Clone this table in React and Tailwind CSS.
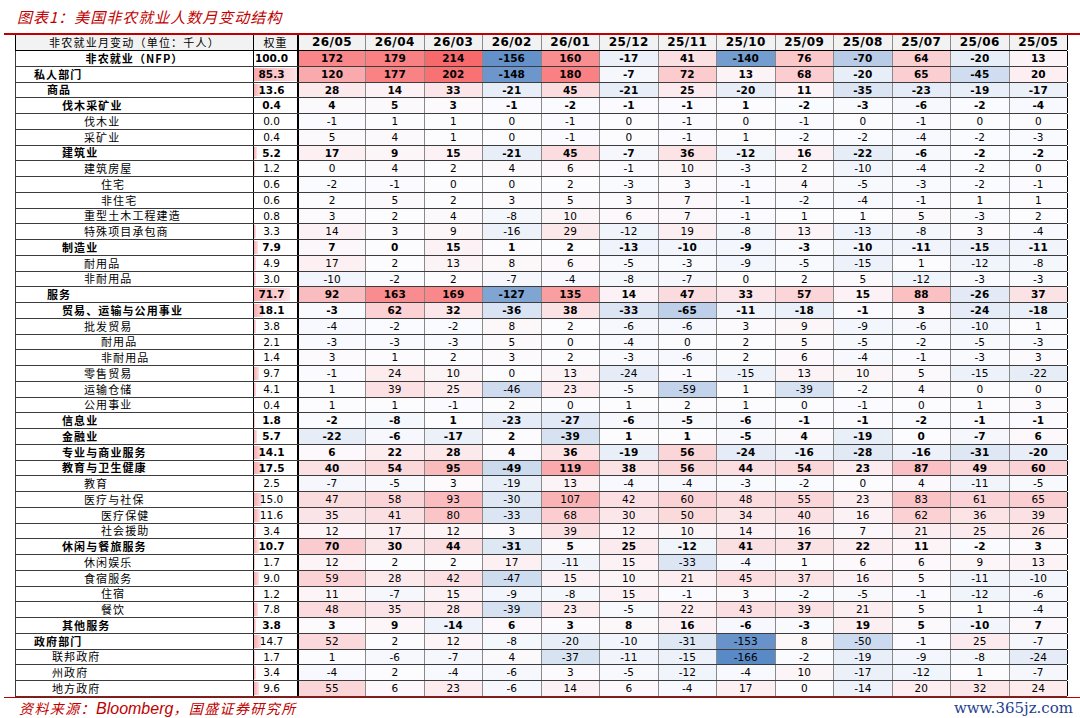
import React from "react";

const MONTHS = ["26/05", "26/04", "26/03", "26/02", "26/01", "25/12", "25/11", "25/10", "25/09", "25/08", "25/07", "25/06", "25/05"];

// pad = label indent in px (null = centered), b = bold row, lb = only label bold
const ROWS = [
  { name: "非农就业（NFP）", w: "100.0", pad: null, b: true, bar: false, v: [172, 179, 214, -156, 160, -17, 41, -140, 76, -70, 64, -20, 13] },
  { name: "私人部门", w: "85.3", pad: 18, b: true, v: [120, 177, 202, -148, 180, -7, 72, 13, 68, -20, 65, -45, 20] },
  { name: "商品", w: "13.6", pad: 31, b: true, v: [28, 14, 33, -21, 45, -21, 25, -20, 11, -35, -23, -19, -17] },
  { name: "伐木采矿业", w: "0.4", pad: 46, b: true, v: [4, 5, 3, -1, -2, -1, -1, 1, -2, -3, -6, -2, -4] },
  { name: "伐木业", w: "0.0", pad: 68, v: [-1, 1, 1, 0, -1, 0, -1, 0, -1, 0, -1, 0, 0] },
  { name: "采矿业", w: "0.4", pad: 68, v: [5, 4, 1, 0, -1, 0, -1, 1, -2, -2, -4, -2, -3] },
  { name: "建筑业", w: "5.2", pad: 46, b: true, v: [17, 9, 15, -21, 45, -7, 36, -12, 16, -22, -6, -2, -2] },
  { name: "建筑房屋", w: "1.2", pad: 68, v: [0, 4, 2, 4, 6, -1, 10, -3, 2, -10, -4, -2, 0] },
  { name: "住宅", w: "0.6", pad: 85, v: [-2, -1, 0, 0, 2, -3, 3, -1, 4, -5, -3, -2, -1] },
  { name: "非住宅", w: "0.6", pad: 85, v: [2, 5, 2, 3, 5, 3, 7, -1, -2, -4, -1, 1, 1] },
  { name: "重型土木工程建造", w: "0.8", pad: 68, v: [3, 2, 4, -8, 10, 6, 7, -1, 1, 1, 5, -3, 2] },
  { name: "特殊项目承包商", w: "3.3", pad: 68, v: [14, 3, 9, -16, 29, -12, 19, -8, 13, -13, -8, 3, -4] },
  { name: "制造业", w: "7.9", pad: 46, b: true, v: [7, 0, 15, 1, 2, -13, -10, -9, -3, -10, -11, -15, -11] },
  { name: "耐用品", w: "4.9", pad: 68, v: [17, 2, 13, 8, 6, -5, -3, -9, -5, -15, 1, -12, -8] },
  { name: "非耐用品", w: "3.0", pad: 68, v: [-10, -2, 2, -7, -4, -8, -7, 0, 2, 5, -12, -3, -3] },
  { name: "服务", w: "71.7", pad: 31, b: true, v: [92, 163, 169, -127, 135, 14, 47, 33, 57, 15, 88, -26, 37] },
  { name: "贸易、运输与公用事业", w: "18.1", pad: 46, b: true, v: [-3, 62, 32, -36, 38, -33, -65, -11, -18, -1, 3, -24, -18] },
  { name: "批发贸易", w: "3.8", pad: 68, v: [-4, -2, -2, 8, 2, -6, -6, 3, 9, -9, -6, -10, 1] },
  { name: "耐用品", w: "2.1", pad: 85, v: [-3, -3, -3, 5, 0, -4, 0, 2, 5, -5, -2, -5, -3] },
  { name: "非耐用品", w: "1.4", pad: 85, v: [3, 1, 2, 3, 2, -3, -6, 2, 6, -4, -1, -3, 3] },
  { name: "零售贸易", w: "9.7", pad: 68, v: [-1, 24, 10, 0, 13, -24, -1, -15, 13, 10, 5, -15, -22] },
  { name: "运输仓储", w: "4.1", pad: 68, v: [1, 39, 25, -46, 23, -5, -59, 1, -39, -2, 4, 0, 0] },
  { name: "公用事业", w: "0.4", pad: 68, v: [1, 1, -1, 2, 0, 1, 2, 1, 0, -1, 0, 1, 3] },
  { name: "信息业", w: "1.8", pad: 46, b: true, v: [-2, -8, 1, -23, -27, -6, -5, -6, -1, -1, -2, -1, -1] },
  { name: "金融业", w: "5.7", pad: 46, b: true, v: [-22, -6, -17, 2, -39, 1, 1, -5, 4, -19, 0, -7, 6] },
  { name: "专业与商业服务", w: "14.1", pad: 46, b: true, v: [6, 22, 28, 4, 36, -19, 56, -24, -16, -28, -16, -31, -20] },
  { name: "教育与卫生健康", w: "17.5", pad: 46, b: true, v: [40, 54, 95, -49, 119, 38, 56, 44, 54, 23, 87, 49, 60] },
  { name: "教育", w: "2.5", pad: 68, v: [-7, -5, 3, -19, 13, -4, -4, -3, -2, 0, 4, -11, -5] },
  { name: "医疗与社保", w: "15.0", pad: 68, v: [47, 58, 93, -30, 107, 42, 60, 48, 55, 23, 83, 61, 65] },
  { name: "医疗保健", w: "11.6", pad: 85, v: [35, 41, 80, -33, 68, 30, 50, 34, 40, 16, 62, 36, 39] },
  { name: "社会援助", w: "3.4", pad: 85, v: [12, 17, 12, 3, 39, 12, 10, 14, 16, 7, 21, 25, 26] },
  { name: "休闲与餐旅服务", w: "10.7", pad: 46, b: true, v: [70, 30, 44, -31, 5, 25, -12, 41, 37, 22, 11, -2, 3] },
  { name: "休闲娱乐", w: "1.7", pad: 68, v: [12, 2, 2, 17, -11, 15, -33, -4, 1, 6, 6, 9, 13] },
  { name: "食宿服务", w: "9.0", pad: 68, v: [59, 28, 42, -47, 15, 10, 21, 45, 37, 16, 5, -11, -10] },
  { name: "住宿", w: "1.2", pad: 85, v: [11, -7, 15, -9, -8, 15, -1, 3, -2, -5, -1, -12, -6] },
  { name: "餐饮", w: "7.8", pad: 85, v: [48, 35, 28, -39, 23, -5, 22, 43, 39, 21, 5, 1, -4] },
  { name: "其他服务", w: "3.8", pad: 46, b: true, v: [3, 9, -14, 6, 3, 8, 16, -6, -3, 19, 5, -10, 7] },
  { name: "政府部门", w: "14.7", pad: 18, lb: true, v: [52, 2, 12, -8, -20, -10, -31, -153, 8, -50, -1, 25, -7] },
  { name: "联邦政府", w: "1.7", pad: 36, v: [1, -6, -7, 4, -37, -11, -15, -166, -2, -19, -9, -8, -24] },
  { name: "州政府", w: "3.4", pad: 36, v: [-4, 2, -4, -6, 3, -5, -12, -4, 10, -17, -12, 1, -7] },
  { name: "地方政府", w: "9.6", pad: 36, v: [55, 6, 23, -6, 14, 6, -4, 17, 0, -14, 20, 32, 24] },
];

const COLS = "grid grid-cols-[238px_45px_67px_repeat(12,58.5px)]";

// three colour scale: blue (min) - white (0) - red (max)
function heat(v) {
  const mix = (a, b, t) => Math.round(a + (b - a) * t);
  let t, to;
  if (v >= 0) {
    t = Math.min(v / 214, 1);
    to = [248, 105, 107];
  } else {
    t = Math.min(-v / 166, 1);
    to = [90, 138, 198];
  }
  const from = [252, 252, 255];
  return `rgb(${mix(from[0], to[0], t)}, ${mix(from[1], to[1], t)}, ${mix(from[2], to[2], t)})`;
}

function Row({ row }) {
  const bold = row.b;
  const barWidth = row.bar === false ? 0 : (parseFloat(row.w) / 85.3) * 43;
  return (
    <div className={`${COLS} h-[15.75px] border-b border-l border-[#3c3c3c]`}>
      <div
        className={`flex items-center bg-white border-r border-black font-['Noto_Sans_CJK_SC',sans-serif] text-[11px] tracking-[1.1px] leading-none text-black ${
          row.pad === null ? "justify-center" : ""
        } ${bold || row.lb ? "font-bold" : "font-normal"}`}
        style={row.pad === null ? undefined : { paddingLeft: row.pad }}
      >
        {row.name}
      </div>
      <div className="relative flex items-center justify-center pr-[8px] border-r-2 border-black bg-white">
        {barWidth > 0 && (
          <div
            className="absolute left-0 top-[1px] bottom-[1px] bg-linear-to-r from-[#f7a9ad] to-[#fde3e5]"
            style={{ width: barWidth }}
          />
        )}
        <span className={`relative font-['DejaVu_Sans',sans-serif] text-[10.5px] leading-none text-black ${bold ? "font-bold" : ""}`}>
          {row.w}
        </span>
      </div>
      {row.v.map((v, i) => (
        <div
          key={i}
          className={`flex items-center justify-center font-['DejaVu_Sans',sans-serif] text-[10.5px] leading-none text-black ${
            bold ? "font-bold" : ""
          } ${i === 12 ? "border-r border-black" : "border-r border-[#8a8a8a]"}`}
          style={{ backgroundColor: heat(v) }}
        >
          {v}
        </div>
      ))}
    </div>
  );
}

export default function App() {
  return (
    <div className="w-[1080px] h-[718px] overflow-hidden bg-white flex flex-col">
      {/* title */}
      <div className="h-[33px] flex items-center pl-[17px] pt-[1px]">
        <span className="italic text-[15px] tracking-[1px] text-[#c00000] font-['Noto_Sans_CJK_SC',sans-serif]">
          图表1：美国非农就业人数月变动结构
        </span>
      </div>
      <div className="ml-[4px] h-[1.5px] bg-[#c00000]" />

      {/* table */}
      <div className="ml-[15px] w-[1052px]">
        <div className={`${COLS} h-[16.5px] border-b border-l border-black bg-[#f2f2f2]`}>
          <div className="flex items-center justify-center border-r border-black font-['Noto_Sans_CJK_SC',sans-serif] text-[11px] tracking-[1.2px] leading-none text-black">
            非农就业月变动（单位：千人）
          </div>
          <div className="flex items-center justify-center border-r-2 border-black font-['Noto_Sans_CJK_SC',sans-serif] text-[11px] tracking-[1px] leading-none text-black">
            权重
          </div>
          {MONTHS.map((m, i) => (
            <div
              key={m}
              className={`flex items-center justify-center font-['DejaVu_Sans',sans-serif] font-bold text-[12px] tracking-[0.4px] leading-none text-black ${
                i === 12 ? "border-r border-black" : "border-r border-[#8a8a8a]"
              }`}
            >
              {m}
            </div>
          ))}
        </div>
        {ROWS.map((r, i) => (
          <Row key={i} row={r} />
        ))}
      </div>

      {/* source */}
      <div className="ml-[4px] h-[1.5px] bg-[#c00000]" />
      <div className="flex-1 flex items-center justify-between pl-[19px] pr-[7px] pt-[1px]">
        <span className="italic text-[14px] tracking-[1.4px] text-[#c00000] font-['Noto_Sans_CJK_SC',sans-serif] leading-none">
          资料来源：<span className="font-['Liberation_Sans',sans-serif] tracking-normal text-[16px]">Bloomberg</span>，国盛证券研究所
        </span>
        <span className="text-[15px] text-[#243f8e] font-['DejaVu_Serif',serif] leading-none">www.365jz.com</span>
      </div>
    </div>
  );
}
